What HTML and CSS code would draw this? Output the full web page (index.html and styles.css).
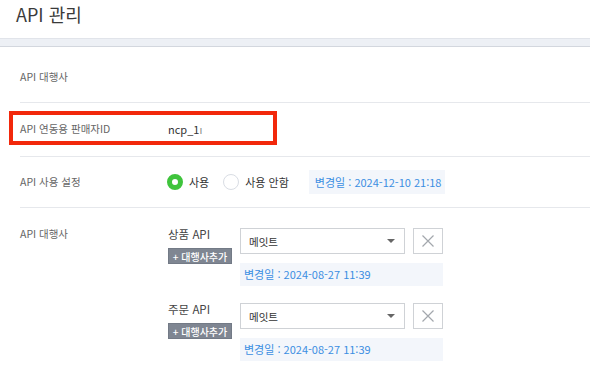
FILE: index.html
```html
<!DOCTYPE html>
<html lang="ko">
<head>
<meta charset="utf-8">
<title>API 관리</title>
<link rel="stylesheet" href="styles.css">
</head>
<body>
<div class="page">
  <header class="header">API 관리</header>
  <div class="band"></div>
  <main class="content">
    <div class="row row-1">
      <div class="label">API 대행사</div>
    </div>
    <div class="row row-2">
      <div class="label">API 연동용 판매자ID</div>
      <div class="value">ncp_1<span class="faint">ı</span></div>
      <div class="highlight"></div>
    </div>
    <div class="row row-3">
      <div class="label">API 사용 설정</div>
      <div class="radios">
        <label class="radio"><span class="dot on"></span>사용</label>
        <label class="radio"><span class="dot"></span>사용 안함</label>
        <div class="date date-inline">변경일 : 2024-12-10 21:18</div>
      </div>
    </div>
    <div class="row row-4">
      <div class="label">API 대행사</div>
      <div class="groups">
        <div class="group">
          <div class="side">
            <div class="name">상품 API</div>
            <div class="add">+ 대행사추가</div>
          </div>
          <div class="main">
            <div class="controls">
              <div class="select"><span>메잇트</span><span class="caret"></span></div>
              <div class="close">
                <svg width="14" height="14" viewBox="0 0 14 14"><path d="M1.5 1.5 L12.5 12.5 M12.5 1.5 L1.5 12.5" stroke="#a3a7ad" stroke-width="1.2" fill="none"/></svg>
              </div>
            </div>
            <div class="date date-block">변경일 : 2024-08-27 11:39</div>
          </div>
        </div>
        <div class="group">
          <div class="side">
            <div class="name">주문 API</div>
            <div class="add">+ 대행사추가</div>
          </div>
          <div class="main">
            <div class="controls">
              <div class="select"><span>메잇트</span><span class="caret"></span></div>
              <div class="close">
                <svg width="14" height="14" viewBox="0 0 14 14"><path d="M1.5 1.5 L12.5 12.5 M12.5 1.5 L1.5 12.5" stroke="#a3a7ad" stroke-width="1.2" fill="none"/></svg>
              </div>
            </div>
            <div class="date date-block">변경일 : 2024-08-27 11:39</div>
          </div>
        </div>
      </div>
    </div>
  </main>
</div>
</body>
</html>
```

FILE: styles.css
```css
* { box-sizing: border-box; }
html, body { margin: 0; padding: 0; background: #fff; }
body {
  font-family: "Noto Sans CJK KR", "Noto Sans", sans-serif;
  color: #333;
  width: 590px;
  height: 378px;
  overflow: hidden;
}
.header {
  height: 38px;
  padding: 0 0 10px 16px;
  font-size: 18px;
  line-height: 28px;
  color: #3a3a3a;
  font-weight: 400;
}
.band {
  height: 9px;
  background: #edf0f5;
  border-top: 1px solid #e1e4ea;
  border-bottom: 1px solid #d3d7de;
}
.content {
  padding-left: 20px;
}
.row {
  display: flex;
  align-items: flex-start;
  border-bottom: 1px solid #e6e8ec;
  position: relative;
}
.label {
  width: 148px;
  flex: none;
  font-size: 10.5px;
  line-height: 16px;
  color: #666;
}
.row-1 { height: 56px; padding-top: 22px; }
.row-2 { height: 54px; padding-top: 18px; }
.value {
  font-size: 11px;
  line-height: 16px;
  color: #333;
}
.faint { color: #888; }
.highlight {
  position: absolute;
  left: -11px;
  top: 8px;
  width: 268px;
  height: 34px;
  border: 4.5px solid #f2280b;
}
.row-3 { height: 51px; align-items: center; }
.radios {
  display: flex;
  align-items: center;
  margin-left: -1px;
}
.radio {
  display: flex;
  align-items: center;
  font-size: 11px;
  color: #333;
  margin-right: 14px;
}
.dot {
  width: 16px;
  height: 16px;
  border-radius: 50%;
  border: 1px solid #d9dde4;
  background: #fff;
  margin-right: 6px;
}
.dot.on {
  border: 5px solid #3fc43c;
}
.date {
  background: #f3f6fb;
  color: #3b8ee2;
  font-size: 11px;
}
.date-inline {
  margin-left: 6px;
  height: 24px;
  line-height: 24px;
  padding: 0 4px 0 6px;
}
.row-4 {
  border-bottom: none;
  padding-top: 20px;
}
.row-4 > .label { line-height: 12px; }
.groups {
  display: flex;
  flex-direction: column;
  gap: 17px;
}
.group {
  display: flex;
}
.side {
  width: 64px;
  margin-right: 8px;
}
.name {
  font-size: 11.5px;
  line-height: 12px;
  color: #444;
}
.add {
  margin-top: 8px;
  height: 16px;
  line-height: 15px;
  background: #7f8692;
  color: #fff;
  font-size: 10px;
  font-weight: 500;
  text-align: center;
  border: 1px solid #737a86;
}
.main { width: 203px; }
.controls {
  display: flex;
  gap: 8px;
}
.select {
  width: 165px;
  height: 26px;
  border: 1px solid #cfd2d6;
  display: flex;
  align-items: center;
  justify-content: space-between;
  padding: 0 9px 0 8px;
  font-size: 10.5px;
  color: #333;
}
.caret {
  width: 0;
  height: 0;
  border-left: 4px solid transparent;
  border-right: 4px solid transparent;
  border-top: 4px solid #666;
}
.close {
  width: 30px;
  height: 26px;
  border: 1px solid #cfd2d6;
  display: flex;
  align-items: center;
  justify-content: center;
}
.date-block {
  margin-top: 9px;
  height: 23px;
  line-height: 23px;
  padding-left: 4px;
}
```
